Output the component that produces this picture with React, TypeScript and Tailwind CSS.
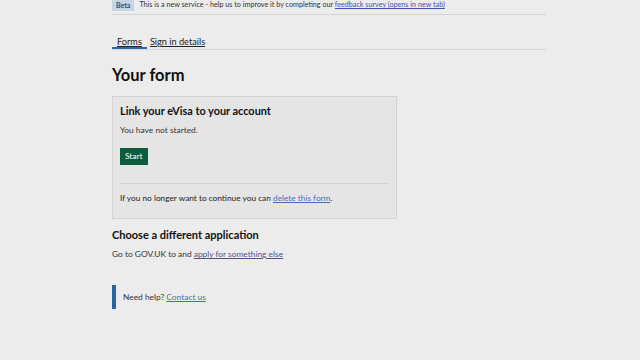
import React from 'react';

const font = { fontFamily: 'Lato, "Noto Sans", Arial, sans-serif' };

const App = () => {
  return (
    <div className="w-[640px] h-[360px] bg-[#ececec] text-[#1f1f1f] overflow-hidden" style={font}>
      <div className="ml-[112px] w-[434px]">
        {/* phase banner */}
        <div className="flex items-center h-[15px] border-b border-[#d4d4d4]">
          <span className="bg-[#c6d5e4] text-[#2a4d73] text-[7px] font-bold px-[4px] h-[11px] leading-[11px] -mt-[3px]">Beta</span>
          <span className="ml-[5px] text-[7.2px] text-[#333] -mt-[3px]">
            This is a new service - help us to improve it by completing our{' '}
            <a className="text-[#4a4fb0] underline">feedback survey (opens in new tab)</a>
          </span>
        </div>

        {/* tabs */}
        <div className="mt-[21px] flex border-b border-[#d6d6d6] h-[14px]">
          <div className="px-[5px] text-[9.2px] leading-[12px] border-b-[2px] border-[#2d67a8] underline text-[#222]">Forms</div>
          <div className="px-[3px] text-[9.2px] leading-[12px] underline text-[#222]">Sign in details</div>
        </div>

        <h1 className="mt-[14px] text-[16.5px] font-bold leading-[22px] text-[#111]">Your form</h1>

        <div className="mt-[10px] w-[285px] h-[123px] bg-[#e5e5e5] border border-[#d3d3d3] px-[7px] pt-[6px]">
          <h2 className="text-[10.9px] font-bold leading-[16px] text-[#111]">Link your eVisa to your account</h2>
          <p className="mt-[5px] text-[8.4px] leading-[12px] text-[#333]">You have not started.</p>
          <button className="mt-[12px] bg-[#0e5c3e] text-white text-[8.4px] h-[17px] px-[5px] leading-[17px]">Start</button>
          <div className="mt-[18px] border-t border-[#d2d2d2]"></div>
          <p className="mt-[8px] text-[8.3px] leading-[12px] text-[#222]">
            If you no longer want to continue you can{' '}
            <a className="text-[#3f73b3] underline">delete this form</a>.
          </p>
        </div>

        <h2 className="mt-[8px] text-[11px] font-bold leading-[16px] text-[#111]">Choose a different application</h2>
        <p className="mt-[5px] text-[8.4px] leading-[12px] text-[#333]">
          Go to GOV.UK to and <a className="text-[#5a4f8f] underline">apply for something else</a>
        </p>

        <div className="mt-[25px] flex items-center h-[24px] border-l-[4px] border-[#2a64a0] pl-[7px]">
          <span className="text-[8.4px] text-[#333]">
            Need help? <a className="text-[#3f73b3] underline">Contact us</a>
          </span>
        </div>
      </div>
    </div>
  );
};

export default App;
